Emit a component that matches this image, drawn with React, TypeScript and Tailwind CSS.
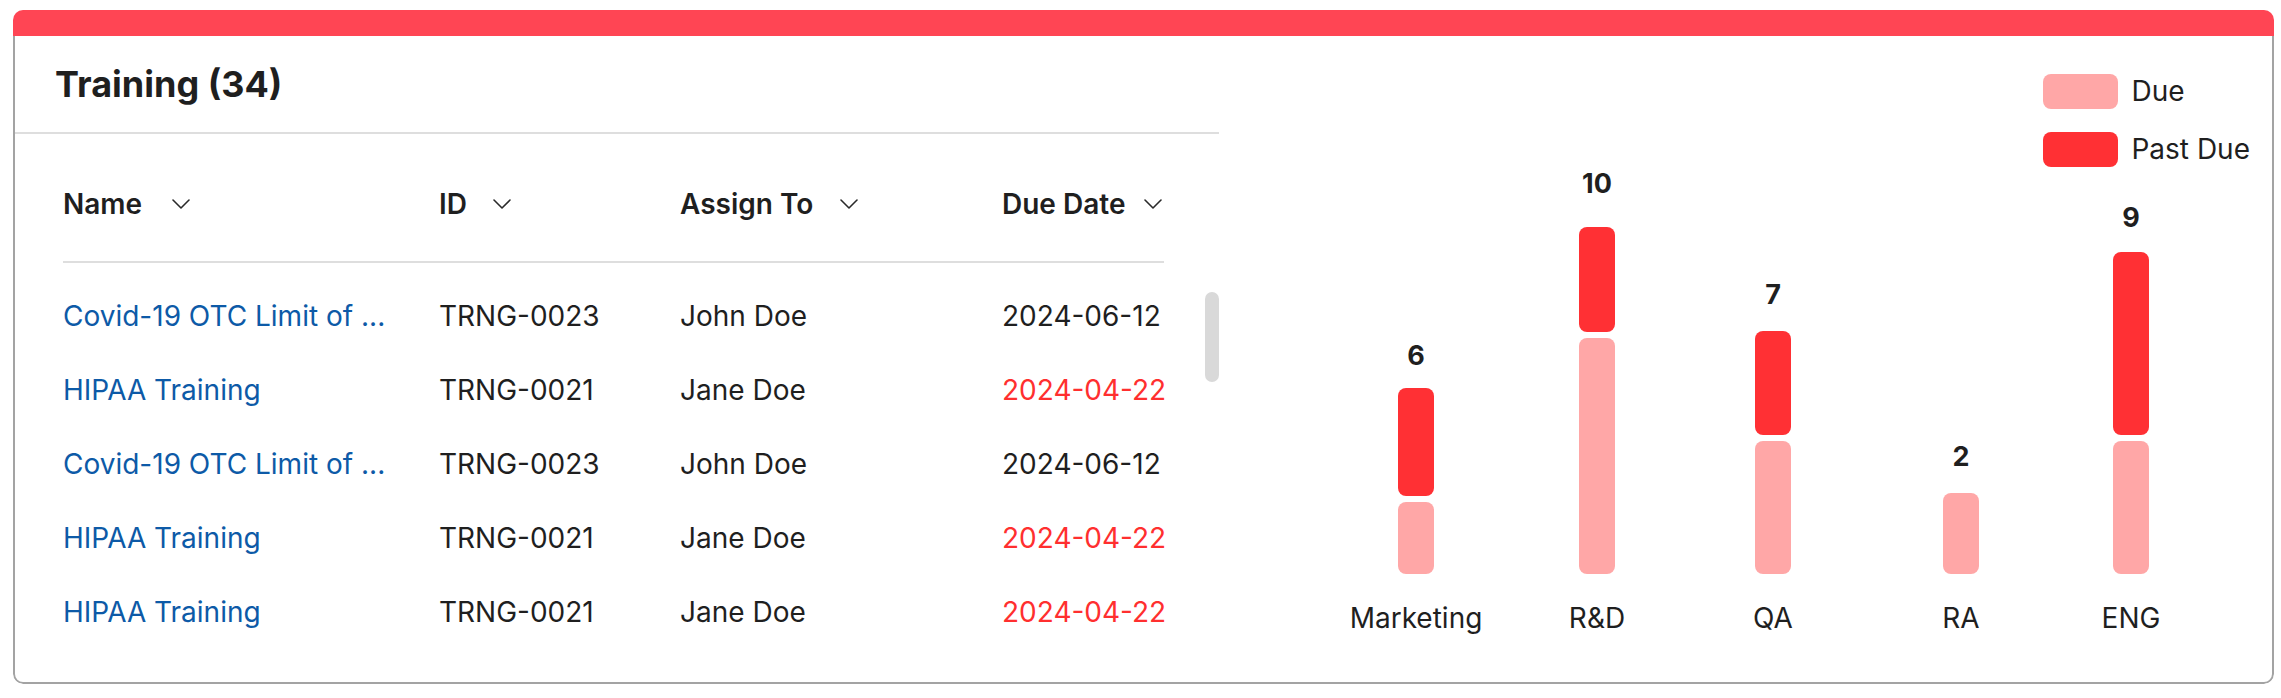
import React from 'react';

type Row = { name: string; id: string; assignee: string; due: string; late: boolean };

const rows: Row[] = [
  { name: 'Covid-19 OTC Limit of ...', id: 'TRNG-0023', assignee: 'John Doe', due: '2024-06-12', late: false },
  { name: 'HIPAA Training', id: 'TRNG-0021', assignee: 'Jane Doe', due: '2024-04-22', late: true },
  { name: 'Covid-19 OTC Limit of ...', id: 'TRNG-0023', assignee: 'John Doe', due: '2024-06-12', late: false },
  { name: 'HIPAA Training', id: 'TRNG-0021', assignee: 'Jane Doe', due: '2024-04-22', late: true },
  { name: 'HIPAA Training', id: 'TRNG-0021', assignee: 'Jane Doe', due: '2024-04-22', late: true },
];

// heights in px, measured against the design
const bars = [
  { label: 'Marketing', total: 6, due: 72, past: 108, labelGap: 17 },
  { label: 'R&D', total: 10, due: 236, past: 105, labelGap: 28 },
  { label: 'QA', total: 7, due: 133, past: 104, labelGap: 21 },
  { label: 'RA', total: 2, due: 81, past: 0, labelGap: 21 },
  { label: 'ENG', total: 9, due: 133, past: 183, labelGap: 19 },
];

const columns = [
  { title: 'Name', gap: 'gap-[30px]' },
  { title: 'ID', gap: 'gap-[26px]' },
  { title: 'Assign To', gap: 'gap-[27px]' },
  { title: 'Due Date', gap: 'gap-[19px]' },
];

const Chevron = () => (
  <svg width="18" height="10" viewBox="0 0 18 10" fill="none" className="shrink-0">
    <polyline points="1,1 9,9 17,1" stroke="#2a2a2a" strokeWidth="1.6" strokeLinecap="round" strokeLinejoin="round" />
  </svg>
);

const TrainingTable: React.FC = () => (
  <div className="w-[1204px] shrink-0 flex flex-col">
    <div className="h-[98px] flex items-center pl-[40px] border-b-2 border-[#dedede]">
      <h2 className="text-[36px] font-bold text-[#1f1f1f] leading-none">Training (34)</h2>
    </div>

    <div className="ml-[48px] w-[1101px] h-[129px] pt-[13px] flex items-center border-b-2 border-[#dedede]">
      <div className="grid grid-cols-[376px_241px_322px_162px] w-full items-center">
        {columns.map((c) => (
          <div key={c.title} className={`flex items-center ${c.gap}`}>
            <span className="text-[28px] font-semibold text-[#1f1f1f] whitespace-nowrap">{c.title}</span>
            <Chevron />
          </div>
        ))}
      </div>
    </div>

    <div className="flex flex-1">
      <div className="ml-[48px] w-[1101px] pt-[16px]">
        {rows.map((r, i) => (
          <div key={i} className="h-[74px] grid grid-cols-[376px_241px_322px_162px] items-center text-[28px] text-[#1f1f1f] whitespace-nowrap">
            <a className="text-[#0d5aa7]">{r.name}</a>
            <span>{r.id}</span>
            <span>{r.assignee}</span>
            <span className={r.late ? 'text-[#ff2f2f]' : ''}>{r.due}</span>
          </div>
        ))}
      </div>
      <div className="ml-auto mt-[29px] w-[14px] h-[90px] rounded-full bg-[#d9d9d9]" />
    </div>
  </div>
);

const Legend: React.FC = () => (
  <div className="absolute top-[38px] right-[22px] flex flex-col gap-[23px]">
    <div className="flex items-center gap-[13px]">
      <div className="w-[75px] h-[35px] rounded-[8px] bg-[#ffa7a7]" />
      <span className="text-[28px] leading-[35px] text-[#1f1f1f]">Due</span>
    </div>
    <div className="flex items-center gap-[13px]">
      <div className="w-[75px] h-[35px] rounded-[8px] bg-[#ff3034]" />
      <span className="text-[28px] leading-[35px] text-[#1f1f1f]">Past Due</span>
    </div>
  </div>
);

const Chart: React.FC = () => (
  <div className="relative flex-1 flex flex-col justify-end pb-[47px]">
    <Legend />
    <div className="ml-[107px] grid grid-cols-[180px_182px_170px_206px_134px] items-end">
      {bars.map((b) => (
        <div key={b.label} className="flex flex-col items-center">
          <span className="text-[27px] font-bold leading-[30px] text-[#1f1f1f]" style={{ marginBottom: b.labelGap }}>
            {b.total}
          </span>
          <div className="flex flex-col gap-[6px] w-[36px]">
            {b.past > 0 && <div className="rounded-[8px] bg-[#ff3034]" style={{ height: b.past }} />}
            <div className="rounded-[8px] bg-[#ffa7a7]" style={{ height: b.due }} />
          </div>
          <span className="mt-[27px] text-[28px] leading-[34px] text-[#1f1f1f] whitespace-nowrap">{b.label}</span>
        </div>
      ))}
    </div>
  </div>
);

export default function App() {
  return (
    <div className="min-h-screen bg-white pl-[13px] pt-[10px] font-['Inter','Noto_Sans',sans-serif]">
      <div className="w-[2261px] h-[674px] rounded-[10px] overflow-hidden flex flex-col">
        <div className="h-[26px] shrink-0 bg-[#ff4554]" />
        <div className="flex flex-1 border-2 border-t-0 border-[#a3a3a3] rounded-b-[10px]">
          <TrainingTable />
          <Chart />
        </div>
      </div>
    </div>
  );
}
